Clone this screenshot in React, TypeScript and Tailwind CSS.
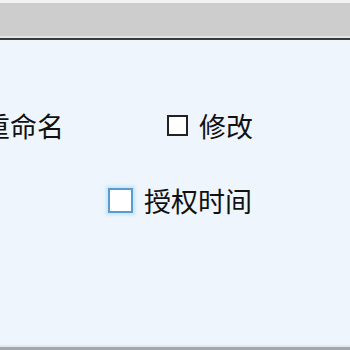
import React from "react";

const font = { fontFamily: '"Microsoft YaHei", "Noto Sans CJK SC", "Noto Sans", sans-serif' };

function Box({ focused }: { focused?: boolean }) {
  return focused ? (
    <span className="inline-block w-[25px] h-[25px] border-[2px] border-[#5b9bd1] bg-white shadow-[0_0_3px_2px_#bfe6fb]" />
  ) : (
    <span className="inline-block w-[21px] h-[21px] border-[2px] border-[#222] bg-white" />
  );
}

export default function App() {
  return (
    <div className="w-[350px] h-[350px] overflow-hidden flex flex-col bg-[#f4f4f4]" style={font}>
      <div className="h-[3px] bg-[#f2f2f2]" />
      <div className="h-[33px] bg-[#cdcdcd]" />
      <div className="h-[2px] bg-[#e4e4e4]" />
      <div className="h-[2px] bg-[#3a3a3a]" />
      <div className="flex-1 bg-[#eef5fc] flex flex-col pt-[72px] text-[27px] leading-[27px] text-[#111]">
        <div className="flex items-center h-[27px]">
          <span className="ml-[-17px]">重命名</span>
          <span className="ml-[103px] flex items-center">
            <Box />
          </span>
          <span className="ml-[11px]">修改</span>
        </div>
        <div className="flex items-center h-[27px] mt-[48px]">
          <span className="ml-[108px] flex items-center">
            <Box focused />
          </span>
          <span className="ml-[11px]">授权时间</span>
        </div>
      </div>
      <div className="h-[2px] bg-[#e2e8ee]" />
      <div className="h-[3px] bg-[#a3a7ab]" />
    </div>
  );
}
